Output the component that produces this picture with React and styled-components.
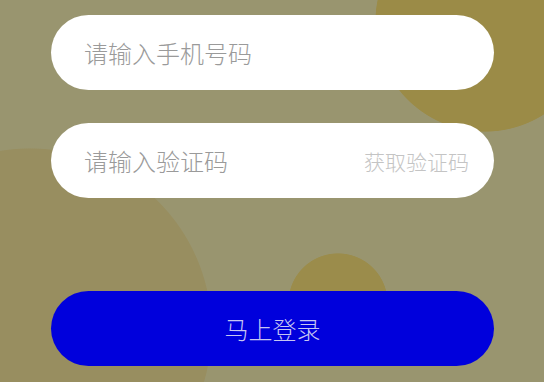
import React from 'react';
import styled, { createGlobalStyle } from 'styled-components';

const GlobalStyle = createGlobalStyle`
  html, body {
    margin: 0;
    padding: 0;
  }
  body {
    font-family: "Noto Sans CJK SC", "Noto Sans", sans-serif;
  }
  * {
    box-sizing: border-box;
  }
`;

const App = () => {
  return (
    <>
      <GlobalStyle />
      <Page>
        <Form>
          <Field>
            <Input type="tel" placeholder="请输入手机号码" />
          </Field>
          <Field>
            <Input type="text" placeholder="请输入验证码" />
            <CodeLink type="button">获取验证码</CodeLink>
          </Field>
          <Submit type="button">马上登录</Submit>
        </Form>
      </Page>
    </>
  );
};

export default App;

const Page = styled.div`
  width: 544px;
  height: 382px;
  overflow: hidden;
  background:
    radial-gradient(circle 110px at 485px 22px, #9b8b47 99.3%, transparent 100%),
    radial-gradient(circle 50px at 338px 303px, #9b8c4b 98.5%, transparent 100%),
    radial-gradient(circle 182px at 30px 330px, #988e60 99.5%, transparent 100%),
    #99956f;
`;

const Form = styled.div`
  display: flex;
  flex-direction: column;
  width: 443px;
  margin-left: 51px;
  padding-top: 15px;
  gap: 33px;
`;

const Field = styled.div`
  display: flex;
  align-items: center;
  height: 75px;
  padding: 0 25px 0 33px;
  background-color: #ffffff;
  border-radius: 38px;
`;

const Input = styled.input`
  flex: 1;
  min-width: 0;
  border: none;
  outline: none;
  background: transparent;
  padding: 0;
  font-family: inherit;
  font-size: 24px;
  font-weight: 300;
  color: #333333;

  &::placeholder {
    color: #9a9a9a;
  }
`;

const CodeLink = styled.button`
  border: none;
  background: transparent;
  padding: 0;
  font-family: inherit;
  font-size: 21px;
  font-weight: 300;
  color: #c4c4c4;
  cursor: pointer;
`;

const Submit = styled.button`
  margin-top: 60px;
  height: 75px;
  border: none;
  border-radius: 38px;
  background-color: #0000dc;
  color: #c6c6f2;
  font-family: inherit;
  font-size: 24px;
  font-weight: 300;
  cursor: pointer;
`;
